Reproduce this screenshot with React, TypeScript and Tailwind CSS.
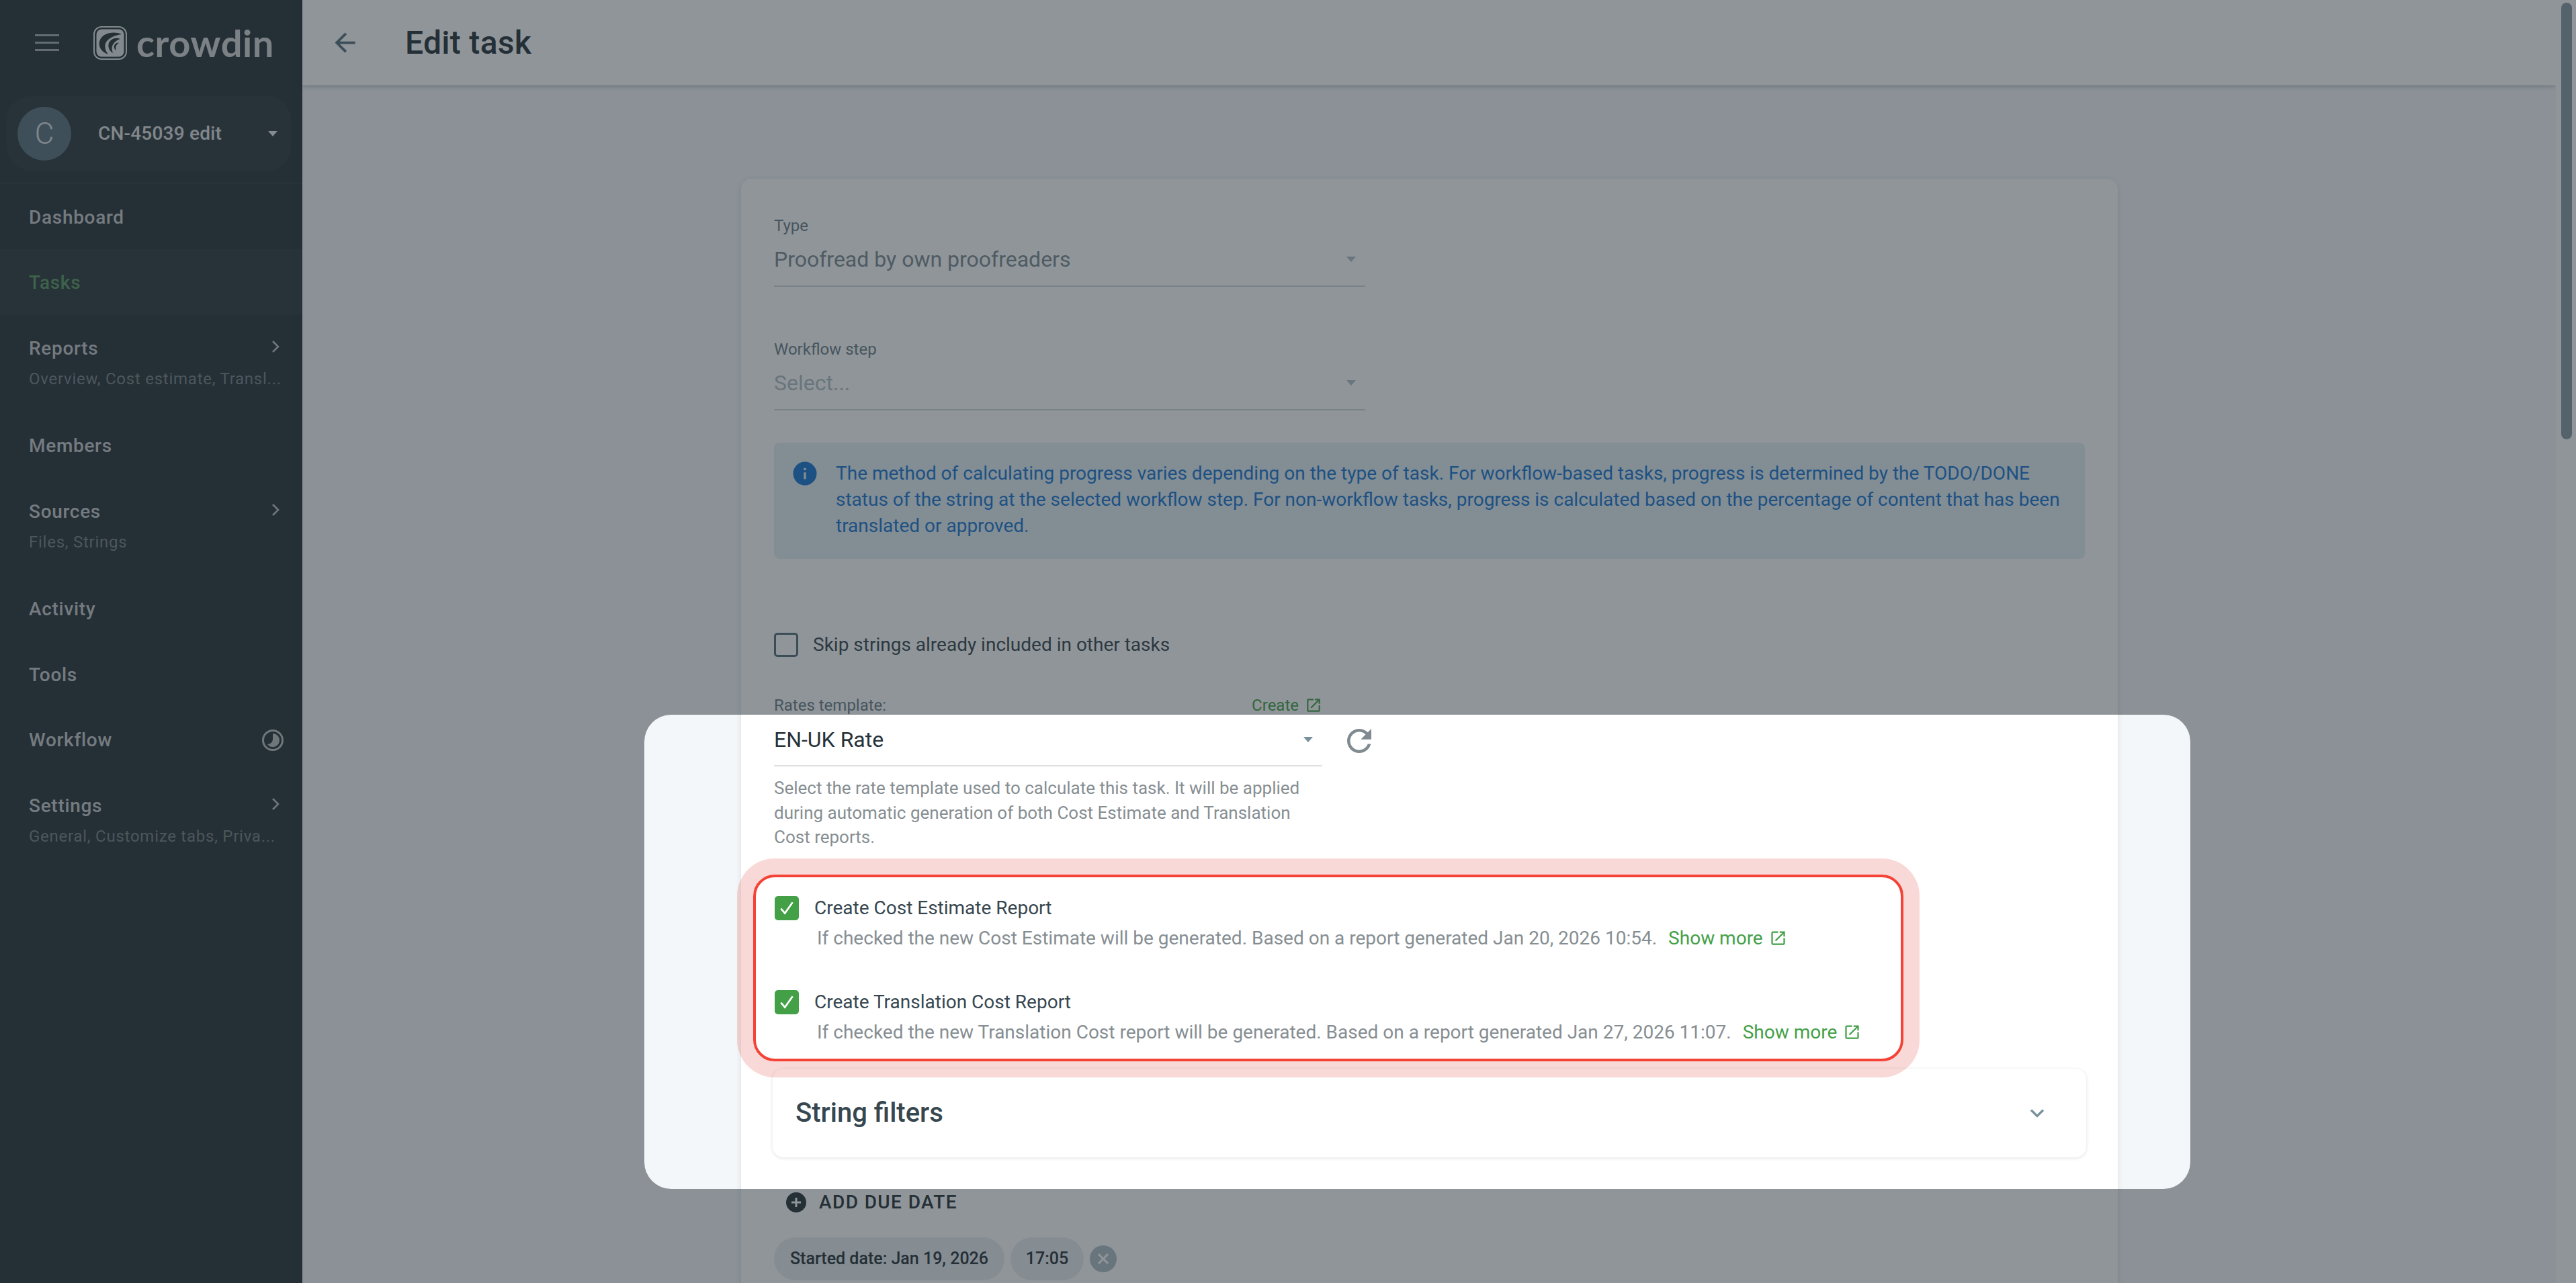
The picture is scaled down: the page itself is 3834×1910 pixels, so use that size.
import React from "react";

const OpenNew = ({ className }: { className: string }) => (
  <svg viewBox="0 0 24 24" fill="currentColor" className={className}>
    <path d="M19 19H5V5h7V3H5c-1.11 0-2 .9-2 2v14c0 1.1.89 2 2 2h14c1.1 0 2-.9 2-2v-7h-2v7zM14 3v2h3.59l-9.83 9.83 1.41 1.41L19 6.41V10h2V3h-7z" />
  </svg>
);

const Chevron = () => (
  <svg viewBox="0 0 12 20" className="w-[12px] h-[20px] -mr-[9px] -mt-[6px]" fill="none" stroke="currentColor" strokeWidth="2.6">
    <path d="M2 2l8 8-8 8" />
  </svg>
);

const Caret = ({ className }: { className: string }) => (
  <svg viewBox="0 0 14 8" fill="currentColor" className={className}>
    <path d="M0 0h14L7 8z" />
  </svg>
);

const Check = () => (
  <div className="w-[36px] h-[36px] rounded-[5px] bg-[#43a047] flex items-center justify-center shrink-0">
    <svg viewBox="0 0 24 24" className="w-[32px] h-[32px]" fill="none" stroke="#fff" strokeWidth="2">
      <path d="M5.5 12.5l4.4 5.2L18.5 5.5" />
    </svg>
  </div>
);

function NavRow({ label, sub, active, right }: { label: string; sub?: string; active?: boolean; right?: React.ReactNode }) {
  return (
    <div className={`${sub ? "h-[145.5px] pt-[31px]" : "h-[97.5px] pt-[4px] items-center"} ${active ? "bg-white/[0.03]" : ""} flex flex-col justify-start px-[43px]`}>
      <div className={`${sub ? "" : "my-auto"} w-full flex items-center justify-between h-[40px]`}>
        <span className={`text-[28px] font-medium tracking-[0.7px] ${active ? "text-[#5a9a62]" : "text-white/75"}`}>{label}</span>
        {right}
      </div>
      {sub && <div className="w-[365px] mt-[9px] text-[24px] leading-[32px] tracking-[0.75px] text-white/40 whitespace-nowrap">{sub}</div>}
    </div>
  );
}

function Sidebar() {
  return (
    <aside className="w-[450px] shrink-0 bg-[#263238] flex flex-col">
      <div className="h-[127px] flex items-center pl-[52px]">
        <div className="w-[36px] flex flex-col gap-[8px]">
          <div className="h-[3px] bg-white/60" />
          <div className="h-[3px] bg-white/60" />
          <div className="h-[3px] bg-white/60" />
        </div>
        <svg viewBox="0 0 50 50" className="w-[50px] h-[50px] ml-[51px]">
          <rect x="1" y="1" width="48" height="48" rx="11" fill="none" stroke="#dfe6e9" strokeWidth="2" />
          <rect x="4.5" y="4.5" width="41" height="41" rx="8" fill="#e3e8ea" />
          <path d="M42 12C30 7 15 10 10 20C6 29 11 38 22 42C16 34 16 26 21 21C26 16 34 13 42 12z" fill="#263238" />
          <path d="M40 19C33 16 26 19 23 25C21 31 24 37 29 40C27 34 27 30 30 26C32 23 36 20 40 19z" fill="#263238" />
          <path d="M38 25C35 24 32 26 31 29C30 32 32 35 34 36C33 33 33 31 34 29C35 27 36 26 38 25z" fill="#263238" />
        </svg>
        <span className="ml-[14px] text-[56px] leading-none font-bold tracking-[0.6px] text-white/80 font-['Lato',sans-serif]">crowdin</span>
      </div>
      <div className="h-[146px] border-b border-white/10 pl-[10px] pr-[17px] pt-[16px]">
        <div className="h-[111px] rounded-[36px] bg-white/[0.04] flex items-center pl-[16px] pr-[20px]">
          <div className="w-[80px] h-[80px] rounded-full bg-[#5d737e] flex items-center justify-center text-[44px] text-white/80 font-light">C</div>
          <span className="ml-[40px] text-[28px] font-medium tracking-[0.2px] text-white/85">CN-45039 edit</span>
          <Caret className="w-[14px] h-[8px] ml-auto text-white/90" />
        </div>
      </div>
      <NavRow label="Dashboard" />
      <NavRow label="Tasks" active />
      <NavRow label="Reports" sub="Overview, Cost estimate, Transl..." right={<span className="text-white/70"><Chevron /></span>} />
      <NavRow label="Members" />
      <NavRow label="Sources" sub="Files, Strings" right={<span className="text-white/70"><Chevron /></span>} />
      <NavRow label="Activity" />
      <NavRow label="Tools" />
      <NavRow
        label="Workflow"
        right={
          <svg viewBox="0 0 34 34" className="w-[34px] h-[34px] -mr-[16px] text-white/70" fill="none">
            <circle cx="17" cy="17" r="14.5" stroke="currentColor" strokeWidth="3" />
            <path d="M17 7a10 10 0 1 1-8 16c4 0 8-3 8-8z" fill="currentColor" />
          </svg>
        }
      />
      <NavRow label="Settings" sub="General, Customize tabs, Priva..." right={<span className="text-white/70"><Chevron /></span>} />
    </aside>
  );
}

function Field({ label, value, muted }: { label: string; value: string; muted?: boolean }) {
  return (
    <div className="w-[880px]">
      <div className="text-[24px] leading-[32px] text-[#6b7f89]">{label}</div>
      <div className="mt-[14px] pb-[19px] border-b-2 border-[#cfd8dc] flex items-center pr-[14px]">
        <span className={`text-[32px] leading-[40px] ${muted ? "text-[#b0bec5]" : "text-[#7a8a92]"}`}>{value}</span>
        <Caret className="w-[14px] h-[8px] ml-auto text-[#b0bec5]" />
      </div>
    </div>
  );
}

function ReportRow({ title, desc, top }: { title: string; desc: string; top: string }) {
  return (
    <div className={top}>
      <div className="flex items-center h-[36px]">
        <Check />
        <span className="ml-[23px] text-[28px] leading-[36px] text-[#37474f]">{title}</span>
      </div>
      <div className="ml-[63px] mt-[7px] flex items-center h-[40px] text-[28px] text-[#868e92] whitespace-nowrap">
        <span>{desc}</span>
        <span className="ml-[17px] text-[#43a047]">Show more</span>
        <OpenNew className="w-[27px] h-[27px] ml-[9px] text-[#43a047]" />
      </div>
    </div>
  );
}

function Card() {
  return (
    <div className="w-[2049px] ml-[653px] mt-[139px] rounded-t-[16px] bg-white shadow-[0_2px_8px_rgba(38,50,56,0.12)] pt-[54px] px-[49px] pb-[200px]">
      <Field label="Type" value="Proofread by own proofreaders" />
      <div className="mt-[77px]">
        <Field label="Workflow step" value="Select..." muted />
      </div>
      <div className="mt-[48px] h-[173px] rounded-[8px] bg-[#e3eff5] flex pl-[26px] pt-[26px]">
        <svg viewBox="0 0 24 24" className="w-[40px] h-[40px] shrink-0 text-[#1976d2]" fill="currentColor">
          <path d="M12 1.5a10.5 10.5 0 1 0 0 21 10.5 10.5 0 0 0 0-21zm1 15.5h-2v-6h2v6zm0-8h-2V7h2v2z" />
        </svg>
        <p className="ml-[26px] text-[28px] leading-[39px] text-[#1976d2]">
          The method of calculating progress varies depending on the type of task. For workflow-based tasks, progress is determined by the TODO/DONE
          <br />
          status of the string at the selected workflow step. For non-workflow tasks, progress is calculated based on the percentage of content that has been
          <br />
          translated or approved.
        </p>
      </div>
      <div className="mt-[108px] h-[40px] flex items-center">
        <div className="w-[36px] h-[36px] rounded-[5px] border-[3px] border-[#546e7a]" />
        <span className="ml-[22px] text-[28px] text-[#37474f]">Skip strings already included in other tasks</span>
      </div>
      <div className="mt-[54px] w-[816px] relative">
        <div className="flex items-center h-[32px]">
          <span className="text-[24px] text-[#6b7f89]">Rates template:</span>
          <span className="ml-auto text-[24px] text-[#43a047]">Create</span>
          <OpenNew className="w-[26px] h-[26px] ml-[9px] text-[#43a047]" />
        </div>
        <div className="mt-[15px] pb-[18px] border-b-2 border-[#e0e0e0] flex items-center pr-[14px]">
          <span className="text-[32px] leading-[40px] text-[#263238]">EN-UK Rate</span>
          <Caret className="w-[14px] h-[8px] ml-auto text-[#78909c]" />
        </div>
        <svg viewBox="0 0 24 24" className="absolute left-[844px] top-[42px] w-[54px] h-[54px] text-[#808b90]" fill="currentColor">
          <path d="M17.65 6.35C16.2 4.9 14.21 4 12 4c-4.42 0-7.99 3.58-7.99 8s3.57 8 7.99 8c3.73 0 6.84-2.55 7.73-6h-2.08c-.82 2.33-3.04 4-5.65 4-3.31 0-6-2.69-6-6s2.69-6 6-6c1.66 0 3.14.69 4.22 1.78L13 11h7V4l-2.35 2.35z" />
        </svg>
        <p className="mt-[14px] text-[26px] leading-[36.5px] text-[#868e92]">
          Select the rate template used to calculate this task. It will be applied during automatic generation of both Cost Estimate and Translation Cost reports.
        </p>
      </div>
      <div className="relative z-10 mt-[37px] -ml-[31px] w-[1712px] h-[278px] rounded-[32px] border-[4px] border-[#f44336] shadow-[0_0_0_24px_rgba(225,67,54,0.2)] pl-[28px]">
        <ReportRow top="mt-[28px]" title="Create Cost Estimate Report" desc="If checked the new Cost Estimate will be generated. Based on a report generated Jan 20, 2026 10:54." />
        <ReportRow top="mt-[57px]" title="Create Translation Cost Report" desc="If checked the new Translation Cost report will be generated. Based on a report generated Jan 27, 2026 11:07." />
      </div>
      <div className="mt-[11px] -mx-[2px] h-[132px] rounded-[16px] bg-white shadow-[0_1px_5px_rgba(38,50,56,0.15)] flex items-center justify-between pl-[34px] pr-[55px]">
        <span className="text-[40px] font-medium text-[#37474f]">String filters</span>
        <svg viewBox="0 0 24 24" className="w-[36px] h-[36px] text-[#78909c]" fill="none" stroke="currentColor" strokeWidth="2.2">
          <path d="M6 9l6 6 6-6" />
        </svg>
      </div>
      <div className="mt-[47px] h-[40px] flex items-center pl-[18px]">
        <svg viewBox="0 0 30 30" className="w-[30px] h-[30px]">
          <circle cx="15" cy="15" r="15" fill="#263238" />
          <path d="M15 8v14M8 15h14" stroke="#fff" strokeWidth="3" />
        </svg>
        <span className="ml-[19px] text-[28px] font-medium tracking-[1.4px] text-[#263238]">ADD DUE DATE</span>
      </div>
      <div className="mt-[32px] flex items-center">
        <div className="h-[64px] w-[343px] rounded-[32px] bg-[#e8edf1] flex items-center justify-center text-[25px] font-medium text-[#263238]">Started date: Jan 19, 2026</div>
        <div className="h-[64px] w-[109px] ml-[9px] rounded-[32px] bg-[#e8edf1] flex items-center justify-center text-[25px] font-medium text-[#263238]">17:05</div>
        <div className="w-[40px] h-[40px] ml-[9px] rounded-full bg-[#b0bec5] flex items-center justify-center">
          <svg viewBox="0 0 24 24" className="w-[28px] h-[28px]" fill="none" stroke="#fff" strokeWidth="2.6">
            <path d="M6 6l12 12M18 6L6 18" />
          </svg>
        </div>
      </div>
    </div>
  );
}

export default function App() {
  return (
    <div className="relative w-[3834px] h-[1910px] overflow-hidden flex bg-[#f4f7f9] font-['Roboto',sans-serif]">
      <Sidebar />
      <main className="flex-1 min-w-0 flex">
        <div className="w-[3354px] flex flex-col">
          <header className="h-[127px] shrink-0 bg-white shadow-[0_2px_6px_rgba(38,50,56,0.25)] flex items-center pl-[41px]">
            <svg viewBox="0 0 24 24" className="w-[45px] h-[45px] text-[#546e7a]" fill="currentColor">
              <path d="M20 11H7.83l5.59-5.59L12 4l-8 8 8 8 1.41-1.41L7.83 13H20v-2z" />
            </svg>
            <h1 className="ml-[67px] text-[48px] font-medium tracking-[0.3px] text-[#263238]">Edit task</h1>
          </header>
          <div className="flex-1 min-h-0">
            <Card />
          </div>
        </div>
        <div className="w-[30px] bg-white pl-[8px] pt-[4px]">
          <div className="w-[16px] h-[650px] rounded-[8px] bg-[#546e7a]/70" />
        </div>
      </main>
      <div className="absolute left-[959px] top-[1064px] w-[2301px] h-[706px] rounded-[40px] shadow-[0_0_0_4000px_rgba(34,44,52,0.5)]" />
    </div>
  );
}
